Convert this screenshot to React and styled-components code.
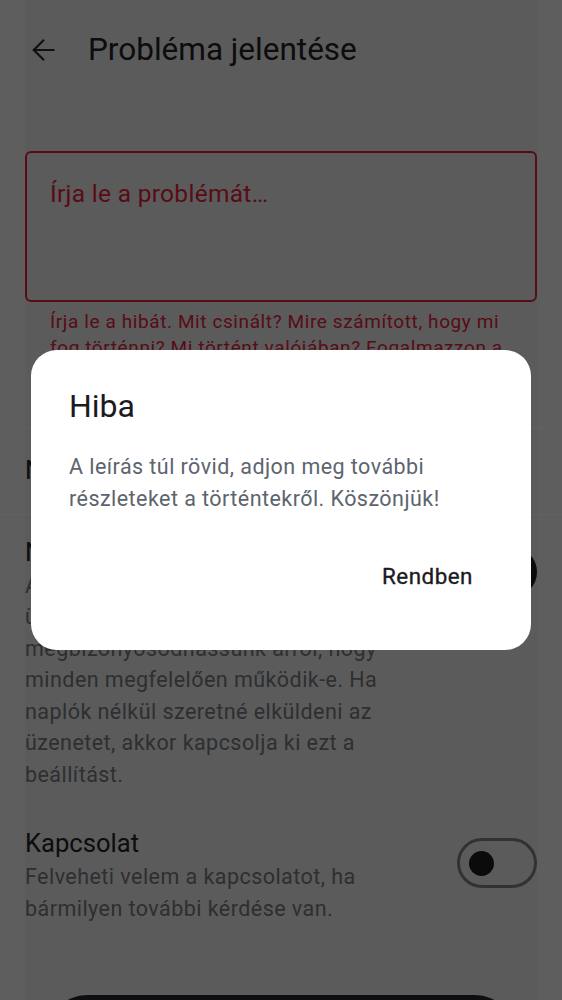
import React from "react";
import styled, { createGlobalStyle } from "styled-components";

const GlobalStyle = createGlobalStyle`
  html, body { margin: 0; padding: 0; }
  body {
    background: #f7f7f7;
    font-family: Roboto, "Noto Sans", "Liberation Sans", sans-serif;
    overflow: hidden;
  }
  * { box-sizing: border-box; }
`;

const Page = styled.div`
  min-height: 100vh;
  background: #f7f7f7;
`;

const Column = styled.main`
  margin: 0 25px;
  background: #efefef;
  min-height: 100vh;
  display: flex;
  flex-direction: column;
`;

const Header = styled.header`
  height: 100px;
  display: flex;
  align-items: center;
  gap: 25px;
`;

const IconButton = styled.button`
  width: 38px;
  height: 38px;
  padding: 0;
  border: 0;
  background: transparent;
  display: flex;
  align-items: center;
  justify-content: center;
  color: #2a2a2a;
`;

const Title = styled.h1`
  margin: 0;
  font-size: 31.5px;
  line-height: 40px;
  font-weight: 400;
  color: #222222;
`;

const Field = styled.textarea`
  margin-top: 51px;
  height: 151px;
  width: 100%;
  border: 2px solid #e8223a;
  border-radius: 6px;
  background: transparent;
  padding: 22px 23px;
  font-family: Roboto, "Noto Sans", sans-serif;
  font-size: 24.5px;
  line-height: 38px;
  letter-spacing: 0.3px;
  resize: none;
  outline: none;
  color: #262626;
  &::placeholder { color: #e8223a; opacity: 1; }
`;

const Helper = styled.p`
  margin: 6.5px 0 0;
  padding: 0 25px;
  font-size: 19px;
  line-height: 26px;
  letter-spacing: 0.6px;
  color: #e8223a;
`;

const Divider = styled.hr`
  margin: ${(p) => p.$top || 0}px -25px 0;
  border: 0;
  height: 1px;
  background: #ffffff;
`;

const LinkRow = styled.div`
  padding: 24px 0 26px;
`;

const RowTitle = styled.div`
  font-size: 25.6px;
  line-height: 36px;
  color: #222222;
`;

const SwitchRow = styled.div`
  display: flex;
  align-items: flex-start;
  gap: 29px;
  padding: ${(p) => p.$top}px 0 17px;
`;

const RowText = styled.div`
  flex: 1;
  min-width: 0;
`;

const RowDesc = styled.p`
  margin: 0;
  font-size: 21.5px;
  line-height: 31.5px;
  letter-spacing: 0.45px;
  color: #787b82;
`;

const Track = styled.div`
  flex: none;
  margin-top: 13px;
  width: 80px;
  height: 50px;
  border-radius: 25px;
  border: 3px solid ${(p) => (p.$on ? "#1d1d22" : "#7e848d")};
  background: ${(p) => (p.$on ? "#1d1d22" : "transparent")};
  display: flex;
  align-items: center;
  justify-content: ${(p) => (p.$on ? "flex-end" : "flex-start")};
  padding: 0 ${(p) => (p.$on ? 3 : 8.5)}px;
`;

const Thumb = styled.div`
  width: ${(p) => (p.$on ? 38 : 25)}px;
  height: ${(p) => (p.$on ? 38 : 25)}px;
  border-radius: 50%;
  background: ${(p) => (p.$on ? "#ffffff" : "#1d1d22")};
`;

const SendButton = styled.button`
  margin: 54px 18px 0;
  height: 90px;
  border: 0;
  border-radius: 45px;
  background: #25272c;
  color: #ffffff;
  font-family: Roboto, sans-serif;
  font-size: 22.4px;
  font-weight: 500;
`;

const Scrim = styled.div`
  position: fixed;
  inset: 0;
  background: rgba(0, 0, 0, 0.62);
  display: flex;
  align-items: center;
  justify-content: center;
`;

const Dialog = styled.div`
  width: 500px;
  background: #ffffff;
  border-radius: 26px;
  padding: 36px 38px 42px;
  display: flex;
  flex-direction: column;
`;

const DialogTitle = styled.h2`
  margin: 0;
  font-size: 32px;
  line-height: 40px;
  font-weight: 400;
  color: #1b1b1f;
`;

const DialogBody = styled.p`
  margin: 24.5px 0 0;
  font-size: 21.5px;
  line-height: 32px;
  letter-spacing: 0.45px;
  color: #5d646e;
`;

const Actions = styled.div`
  margin-top: 29px;
  display: flex;
  justify-content: flex-end;
`;

const TextButton = styled.button`
  height: 64px;
  padding: 0 19px;
  margin-right: 1px;
  border: 0;
  background: transparent;
  font-family: Roboto, sans-serif;
  font-size: 22.4px;
  font-weight: 400;
  letter-spacing: 0.5px;
  -webkit-text-stroke: 0.35px #1b1b1f;
  color: #1b1b1f;
`;

function Switch({ on }) {
  return (
    <Track $on={on}>
      <Thumb $on={on} />
    </Track>
  );
}

function BackArrow() {
  return (
    <svg width="24" height="24" viewBox="0 0 24 24" fill="none">
      <path
        d="M22.5 12H1.8M12 1.8L1.8 12L12 22.2"
        stroke="currentColor"
        strokeWidth="2.2"
      />
    </svg>
  );
}

export default function App() {
  return (
    <>
      <GlobalStyle />
      <Page>
        <Column>
          <Header>
            <IconButton aria-label="Vissza">
              <BackArrow />
            </IconButton>
            <Title>Probléma jelentése</Title>
          </Header>
          <Field placeholder="Írja le a problémát…" />
          <Helper>
            Írja le a hibát. Mit csinált? Mire számított, hogy mi fog történni? Mi
            történt valójában? Fogalmazzon a lehető legpontosabban.
          </Helper>
          <Divider $top={40} />
          <LinkRow>
            <RowTitle>Naplók megtekintése</RowTitle>
          </LinkRow>
          <Divider />
          <SwitchRow $top={19}>
            <RowText>
              <RowTitle>Naplók küldése</RowTitle>
              <RowDesc>
                A naplók küldésével segít nekünk az üzenet kivizsgálásában és hogy
                megbizonyosodhassunk arról, hogy minden megfelelően működik-e. Ha
                naplók nélkül szeretné elküldeni az üzenetet, akkor kapcsolja ki ezt
                a beállítást.
              </RowDesc>
            </RowText>
            <Switch on />
          </SwitchRow>
          <SwitchRow $top={18}>
            <RowText>
              <RowTitle>Kapcsolat</RowTitle>
              <RowDesc>
                Felveheti velem a kapcsolatot, ha bármilyen további kérdése van.
              </RowDesc>
            </RowText>
            <Switch />
          </SwitchRow>
          <SendButton>Küldés</SendButton>
        </Column>
      </Page>
      <Scrim>
        <Dialog role="alertdialog">
          <DialogTitle>Hiba</DialogTitle>
          <DialogBody>
            A leírás túl rövid, adjon meg további részleteket a történtekről.
            Köszönjük!
          </DialogBody>
          <Actions>
            <TextButton>Rendben</TextButton>
          </Actions>
        </Dialog>
      </Scrim>
    </>
  );
}
